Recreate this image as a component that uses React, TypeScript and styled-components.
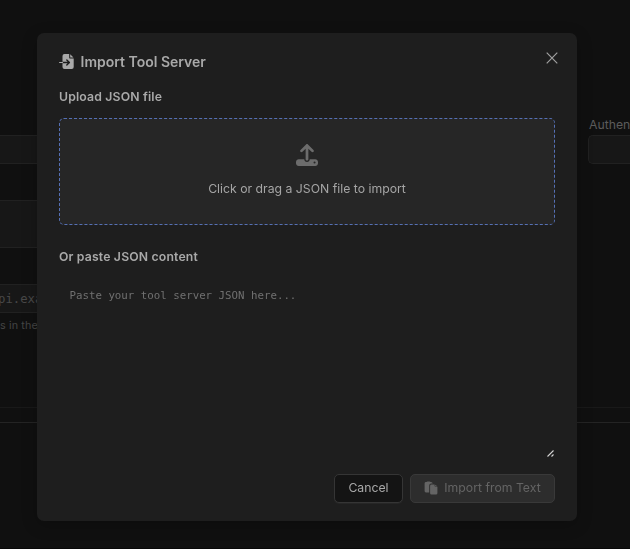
import React from "react";
import styled, { createGlobalStyle } from "styled-components";
import { FaUpload } from "react-icons/fa6";

const GlobalStyle = createGlobalStyle`
  * { box-sizing: border-box; }
  html, body, #root { height: 100%; }
  body {
    margin: 0;
    overflow: hidden;
    background: #101010;
    color: #a9a9a9;
    font-family: Inter, "Liberation Sans", sans-serif;
    font-size: 12.25px;
  }
`;

const Page = styled.main`
  height: 549px;
  overflow: hidden;
  border-bottom: 1px solid #080808;
`;

const FormArea = styled.div`
  display: grid;
  grid-template-columns: 550px 1fr;
  column-gap: 38px;
  height: 408px;
  border-bottom: 1px solid #191919;
`;

const Column = styled.div<{ $top: number }>`
  display: flex;
  flex-direction: column;
  padding-top: ${(p) => p.$top}px;
  min-width: 0;
`;

const FieldLabel = styled.label`
  height: 20px;
  line-height: 20px;
  color: #5b5b5b;
  white-space: nowrap;
  padding-left: 1px;
`;

const Field = styled.div<{ $height: number; $gap?: number; $open?: "left" | "right" }>`
  height: ${(p) => p.$height}px;
  margin-top: ${(p) => p.$gap ?? 0}px;
  border: 1px solid #212121;
  border-${(p) => p.$open ?? "left"}: 0;
  border-radius: ${(p) => (p.$open === "right" ? "5px 0 0 5px" : "0 5px 5px 0")};
  background: #171717;
  color: #484848;
  font: 12.25px/28px "DejaVu Sans Mono", monospace;
  text-indent: -2px;
  white-space: pre;
  overflow: hidden;
`;

const Hint = styled.div`
  margin-top: 5px;
  font-size: 10.8px;
  letter-spacing: 0.1px;
  line-height: 16px;
  color: #444;
`;

const Divider = styled.div`
  height: 15px;
  border-bottom: 1px solid #242424;
`;

const Overlay = styled.div`
  position: fixed;
  inset: 0;
  padding: 33px 53px 28px 37px;
`;

const Dialog = styled.section`
  display: flex;
  flex-direction: column;
  width: 540px;
  height: 488px;
  padding: 17px 22px 18px;
  border-radius: 7px;
  background: #1e1e1e;
  box-shadow: 0 4px 16px rgba(0, 0, 0, 0.22);
`;

const Header = styled.header`
  display: flex;
  justify-content: space-between;
  height: 37px;
`;

const Title = styled.h1`
  display: flex;
  align-items: center;
  gap: 6.5px;
  height: 23px;
  margin: 0;
  font-size: 14px;
  font-weight: 600;
  line-height: 23px;
  white-space: nowrap;
`;

const CloseButton = styled.button`
  display: flex;
  width: 12px;
  height: 12px;
  margin: 2px -3px 0 0;
  padding: 0;
  border: 0;
  background: none;
  color: #a0a0a0;
`;

const SectionLabel = styled.h2`
  height: 20px;
  margin: 0;
  font-size: 12.25px;
  letter-spacing: 0.16px;
  line-height: 20px;
  font-weight: 600;
  white-space: nowrap;
`;

const DropZone = styled.div`
  display: flex;
  flex-direction: column;
  align-items: center;
  flex: none;
  height: 107px;
  margin: 11px 0 22px;
  padding-top: 25px;
  border: 1px dashed #5570b5;
  border-radius: 5px;
  background: #262626;
  color: #a5a5a5;

  svg { color: #6c6c6c; }
  span { margin-top: 13px; line-height: 20px; }
`;

const PasteBox = styled.div`
  position: relative;
  height: 179px;
  margin: 12px 0;
`;

const PasteArea = styled.textarea`
  display: block;
  width: 496px;
  height: 179px;
  padding: 8px 9.5px;
  border: 1px solid transparent;
  outline: 0;
  resize: none;
  background: none;
  color: #a9a9a9;
  font: 10.78px/16px "DejaVu Sans Mono", monospace;

  &::placeholder { color: #707070; opacity: 1; }
`;

const ResizeGrip = styled.svg`
  position: absolute;
  right: 0;
  bottom: 1px;
`;

const Actions = styled.footer`
  display: flex;
  justify-content: flex-end;
  gap: 7px;
  margin-top: auto;
`;

const Button = styled.button<{ $width: number; $muted?: boolean }>`
  display: flex;
  align-items: center;
  justify-content: center;
  gap: 6px;
  width: ${(p) => p.$width}px;
  height: 29px;
  padding: 0 0 2px;
  border: 1px solid ${(p) => (p.$muted ? "#393939" : "#353535")};
  border-radius: 5px;
  background: ${(p) => (p.$muted ? "#2d2d2d" : "#141414")};
  box-shadow: ${(p) => (p.$muted ? "none" : "0 1px 0 #262626")};
  color: ${(p) => (p.$muted ? "#646464" : "#a9a9a9")};
  font: 12.25px Inter, sans-serif;
  white-space: nowrap;
`;

const ImportIcon = () => (
  <svg width="15" height="15" viewBox="0 0 15 15" fill="none">
    <path
      d="M5.5 0H10.2V3.4Q10.2 4.6 11.4 4.6H14.7V13Q14.7 15 12.7 15H5.5Q3.5 15 3.5 13V2Q3.5 0 5.5 0Z M11.2 .2L14.5 3.6H11.2Z"
      fill="currentColor"
    />
    <path d="M3.5 8.5H10.2M7.8 5.9L10.4 8.5L7.8 11.1" stroke="#1e1e1e" strokeWidth="1.4" strokeLinecap="round" strokeLinejoin="round" />
    <path d="M.6 8.5H3.5" stroke="currentColor" strokeWidth="1.2" strokeLinecap="round" />
  </svg>
);

const PasteIcon = () => (
  <svg width="14" height="14" viewBox="0 0 14 14" fill="currentColor">
    <path d="M2 1H2.4Q2.8 .4 3.6 .4H5.4Q6.2 .4 6.6 1H7Q8.5 1 8.7 2.6H7.2Q5.2 2.6 5.2 4.6V11.4H2Q.6 11.4 .6 10V2.4Q.6 1 2 1Z" />
    <path d="M7.5 3.6H10.6V4.8Q10.6 5.8 11.6 5.8H13.4V12.2Q13.4 13.6 12 13.6H7.5Q6.1 13.6 6.1 12.2V5Q6.1 3.6 7.5 3.6Z M11.2 3.7L13.3 5.3H11.2Z" />
  </svg>
);

export default function App() {
  return (
    <>
      <GlobalStyle />
      <Page>
        <FormArea>
          <Column $top={135}>
            <Field $height={29} />
            <Field $height={48} $gap={36} />
            <Field $height={29} $gap={36}>pi.exa</Field>
            <Hint>s in the</Hint>
          </Column>
          <Column $top={115}>
            <FieldLabel>Authen</FieldLabel>
            <Field $height={29} $open="right" />
          </Column>
        </FormArea>
        <Divider />
      </Page>
      <Overlay>
        <Dialog role="dialog" aria-label="Import Tool Server">
          <Header>
            <Title>
              <ImportIcon />
              <span>Import Tool Server</span>
            </Title>
            <CloseButton aria-label="Close">
              <svg width="12" height="12" viewBox="0 0 12 12" stroke="currentColor" strokeWidth="1.2">
                <path d="M.7.7l10.6 10.6M11.3.7L.7 11.3" />
              </svg>
            </CloseButton>
          </Header>
          <SectionLabel>Upload JSON file</SectionLabel>
          <DropZone>
            <FaUpload size={22} />
            <span>Click or drag a JSON file to import</span>
          </DropZone>
          <SectionLabel>Or paste JSON content</SectionLabel>
          <PasteBox>
            <PasteArea placeholder="Paste your tool server JSON here..." />
            <ResizeGrip width="8" height="8" viewBox="0 0 8 8" stroke="#d4d4d4" strokeWidth="1.1">
              <path d="M.5 7.5l6-6M4.5 7.5l2-2" />
            </ResizeGrip>
          </PasteBox>
          <Actions>
            <Button $width={69}>Cancel</Button>
            <Button $width={145} $muted disabled>
              <PasteIcon />
              Import from Text
            </Button>
          </Actions>
        </Dialog>
      </Overlay>
    </>
  );
}
